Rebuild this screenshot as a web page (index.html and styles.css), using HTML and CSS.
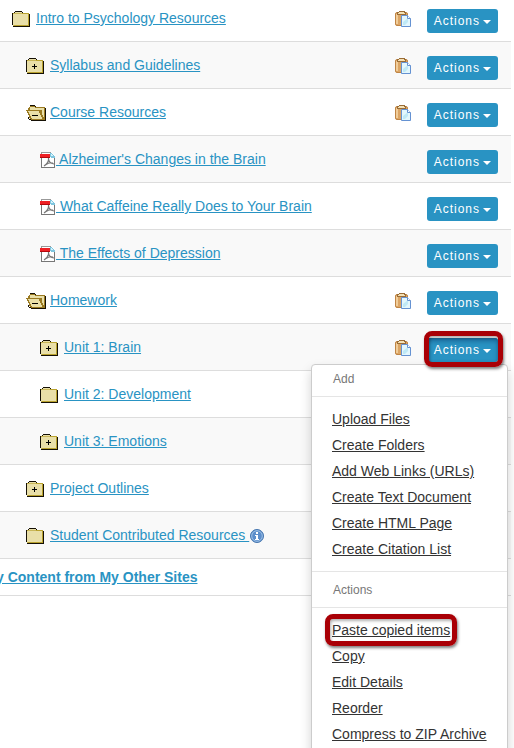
FILE: index.html
```html
<!DOCTYPE html>
<html lang="en">
<head>
<meta charset="utf-8">
<title>Resources</title>
<link rel="stylesheet" href="styles.css">
</head>
<body>
<svg class="sprites" aria-hidden="true">
  <defs>
    <symbol id="folder" viewBox="0 0 18 16">
      <path fill="#151005" d="M3 0h7v1h1v1H9V1H3zM2 1h1v1H2zM0 2h1v12H0zM17 3h1v13H1v-1h16z"/>
      <path fill="#b9a22e" d="M1 2h16v13H1z"/>
      <path fill="#e9dfa8" d="M3 1h7v1H3zM1 3h15v11H1z"/>
      <path fill="#c9b75a" d="M1 14h1v1H1zM2 2h8v1H2z"/>
    </symbol>
    <symbol id="folder-plus" viewBox="0 0 18 16">
      <use href="#folder"/>
      <path fill="#000" d="M8 6h1v2h2v1H9v2H8V9H6V8h2z"/>
    </symbol>
    <symbol id="folder-open" viewBox="0 0 20 16">
      <path fill="#151005" d="M4 0h5v1H4zM9 1h1v1H9zM19 3h1v13H5v-1h14zM3 14h2v1H3zM2 12h1v2H2z"/>
      <path fill="#9a7a22" d="M4 1h5v1h10v13H5v-1H4v-1H3V5H2V3h1V2h1z"/>
      <path fill="#e9dfa8" d="M4 2h5v1h9v11h-2V5H4z"/>
      <path fill="#9a7a22" d="M0 5h14v1h1v2h1v2h1v2h1v3H5v-1H4v-2H3v-2H2V8H1V6H0z"/>
      <path fill="#e9dfa8" d="M2 6h11v2h1v2h1v2h1v2H6v-1H5v-2H4V9H3V7H2z"/>
      <path fill="#000" d="M6 10h6v1H6z"/>
    </symbol>
    <symbol id="pdf" viewBox="0 0 16 16">
      <path fill="#fff" d="M1 0h10l4 4v12H1z"/>
      <path fill="#999" d="M1 0h10v1H2v1H1z"/>
      <path fill="#777" d="M1 6h1v9h12v1H1zM14 5h1v11h-1z"/>
      <path fill="#7fc6df" d="M10 1h2v1h1v1h1v1h1v2h-4V5h-1z"/>
      <path fill="#d8f3fb" d="M11 2h1v1h1v1h-2z"/>
      <path fill="#ee2024" d="M0 2h10v3H0z"/>
      <path fill="#b5080c" d="M0 5h10v1H0z"/>
      <path fill="none" stroke="#777" stroke-width="1.200" shape-rendering="auto" d="M4 14c3-2 5-5 4.500-8M8.500 6.500c0 3 2.500 5 5.500 5.500M6 12.500c2-1.500 5-2 7-1.500"/>
    </symbol>
    <symbol id="clipboard" viewBox="0 0 16 16">
      <rect x=".5" y="1.500" width="12" height="13" rx="1.500" fill="#dba565" stroke="#c08545"/>
      <path fill="#f0cd9a" d="M1 3h2v10H1z"/>
      <path fill="#9a6c35" d="M4 0h6v1h1v3H2V1h2z"/>
      <path fill="#f4e0b4" d="M4 1h5v1H4zM3 2h7v1H3z"/>
      <path fill="#e3f7fd" stroke="#6592d2" d="M6.500 4.500h6l3 3v8h-9z"/>
      <path fill="#bfe9f6" d="M8 11l5-4v4l-3 3H8z"/>
      <path fill="#fff" stroke="#6592d2" d="M12.500 4.500v3h3"/>
    </symbol>
    <symbol id="info" viewBox="0 0 14 14">
      <circle cx="7" cy="7" r="6.500" fill="#5c8ecb" stroke="#4676ae"/>
      <circle cx="7" cy="7" r="5.300" fill="none" stroke="#9fc1e6"/>
      <path fill="#fff" d="M6 3h2v2H6zM5 6h3v4h1v1H5v-1h1V7H5z"/>
    </symbol>
  </defs>
</svg>

<main>
  <ul class="resources">
    <li class="row">
      <svg class="icon folder"><use href="#folder"/></svg><a class="name" href="#">Intro to Psychology Resources</a>
      <svg class="clip"><use href="#clipboard"/></svg><button class="actions" type="button">Actions</button>
    </li>
    <li class="row level1">
      <svg class="icon folder"><use href="#folder-plus"/></svg><a class="name" href="#">Syllabus and Guidelines</a>
      <svg class="clip"><use href="#clipboard"/></svg><button class="actions" type="button">Actions</button>
    </li>
    <li class="row level1">
      <svg class="icon open"><use href="#folder-open"/></svg><a class="name" href="#">Course Resources</a>
      <svg class="clip"><use href="#clipboard"/></svg><button class="actions" type="button">Actions</button>
    </li>
    <li class="row level2">
      <svg class="icon file"><use href="#pdf"/></svg><a class="name spaced" href="#"> Alzheimer's Changes in the Brain</a>
      <button class="actions" type="button">Actions</button>
    </li>
    <li class="row level2">
      <svg class="icon file"><use href="#pdf"/></svg><a class="name spaced" href="#"> What Caffeine Really Does to Your Brain</a>
      <button class="actions" type="button">Actions</button>
    </li>
    <li class="row level2">
      <svg class="icon file"><use href="#pdf"/></svg><a class="name spaced" href="#"> The Effects of Depression</a>
      <button class="actions" type="button">Actions</button>
    </li>
    <li class="row level1">
      <svg class="icon open"><use href="#folder-open"/></svg><a class="name" href="#">Homework</a>
      <svg class="clip"><use href="#clipboard"/></svg><button class="actions" type="button">Actions</button>
    </li>
    <li class="row level2">
      <svg class="icon folder"><use href="#folder-plus"/></svg><a class="name" href="#">Unit 1: Brain</a>
      <svg class="clip"><use href="#clipboard"/></svg>
      <div class="dropdown">
        <button class="actions pressed" type="button" aria-expanded="true">Actions</button>
        <div class="menu">
          <h2>Add</h2>
          <ul>
            <li><a href="#">Upload Files</a></li>
            <li><a href="#">Create Folders</a></li>
            <li><a href="#">Add Web Links (URLs)</a></li>
            <li><a href="#">Create Text Document</a></li>
            <li><a href="#">Create HTML Page</a></li>
            <li><a href="#">Create Citation List</a></li>
          </ul>
          <h2>Actions</h2>
          <ul>
            <li><a class="marked" href="#">Paste copied items</a></li>
            <li><a href="#">Copy</a></li>
            <li><a href="#">Edit Details</a></li>
            <li><a href="#">Reorder</a></li>
            <li><a href="#">Compress to ZIP Archive</a></li>
          </ul>
        </div>
      </div>
    </li>
    <li class="row level2">
      <svg class="icon folder"><use href="#folder"/></svg><a class="name" href="#">Unit 2: Development</a>
    </li>
    <li class="row level2">
      <svg class="icon folder"><use href="#folder-plus"/></svg><a class="name" href="#">Unit 3: Emotions</a>
    </li>
    <li class="row level1">
      <svg class="icon folder"><use href="#folder-plus"/></svg><a class="name" href="#">Project Outlines</a>
    </li>
    <li class="row level1">
      <svg class="icon folder"><use href="#folder"/></svg><a class="name spaced" href="#">Student Contributed Resources </a><svg class="info"><use href="#info"/></svg>
    </li>
  </ul>
  <div class="other"><a href="#">y Content from My Other Sites</a></div>
</main>
</body>
</html>
```
FILE: styles.css
```css
* { box-sizing: border-box; }

body {
  margin: 0;
  height: 100vh;
  overflow: hidden;
  background: #fff;
  font: 14px/20px "Liberation Sans", Arial, sans-serif;
}

main { margin-right: 3px; }

.sprites { position: absolute; width: 0; height: 0; }

ul { list-style: none; margin: 0; padding: 0; }

/* The list is scrolled slightly past its first row's top edge. */
.resources { margin-top: -5px; }

.row {
  display: flex;
  align-items: flex-start;
  height: 47px;
  padding: 13px 13px 0 12px;
  border-bottom: 1px solid #ddd;
}
.row:nth-child(even) { background: #f9f9f9; }
.level1 { padding-left: 26px; }
.level2 { padding-left: 40px; }

.icon { flex: none; height: 16px; margin-top: 3px; shape-rendering: crispEdges; }
.folder { width: 18px; margin-right: 6px; }
.open { width: 20px; margin-right: 4px; }
.file { width: 16px; }

.name, .other a { color: #2993c3; text-underline-offset: 1px; }
.spaced { white-space: pre; }
.info { width: 14px; height: 14px; margin: 4px 0 0 1px; }

.clip { flex: none; width: 16px; height: 16px; margin: 3px 16px 0 auto; }
.name + .actions { margin-left: auto; }

.actions {
  display: flex;
  align-items: center;
  gap: 3px;
  flex: none;
  height: 24px;
  margin: 1px 0 0;
  padding: 0 7px;
  border: 0;
  border-radius: 3px;
  background: #2993c3;
  color: #fff;
  font: 12px/24px "Liberation Sans", Arial, sans-serif;
  letter-spacing: 1px;
}
.actions::after {
  content: "";
  margin-top: 1px;
  border: 4px solid transparent;
  border-top-color: #fff;
  border-bottom: 0;
}

.dropdown { position: relative; }
.pressed { box-shadow: inset 0 3px 5px #1a6595; }

.menu {
  position: absolute;
  top: 27px;
  right: -10px;
  z-index: 1;
  width: 197px;
  padding-bottom: 14px;
  border: 1px solid #ccc;
  border-radius: 4px;
  background: #fff;
  box-shadow: 0 6px 12px rgba(0, 0, 0, .18);
}
.menu h2 {
  margin: 0;
  padding: 4px 21px 7px;
  border-bottom: 1px solid #e5e5e5;
  color: #777;
  font-size: 12px;
  font-weight: 400;
}
.menu ul + h2 { padding-top: 8px; border-top: 1px solid #e5e5e5; }
.menu ul { padding: 9px 20px; }
.menu li { height: 26px; line-height: 26px; white-space: nowrap; }
.menu a { color: #333; text-underline-offset: 1px; }

/* Red rings that call out the two controls to click. */
.marked { position: relative; }
.marked::after,
.dropdown::after {
  content: "";
  position: absolute;
  z-index: 2;
  inset: -8px -7px;
  border: 5px solid #a90006;
  border-radius: 8px;
  box-shadow: 1px 2px 3px rgba(0, 0, 0, .5), inset 1px 2px 3px rgba(0, 0, 0, .3);
  pointer-events: none;
}
.dropdown::after { inset: -6px -5px -5px -3px; }

.other {
  height: 37px;
  padding-top: 8px;
  border-bottom: 1px solid #ddd;
  font-weight: 700;
}
.other a { margin-left: -4px; }
```
